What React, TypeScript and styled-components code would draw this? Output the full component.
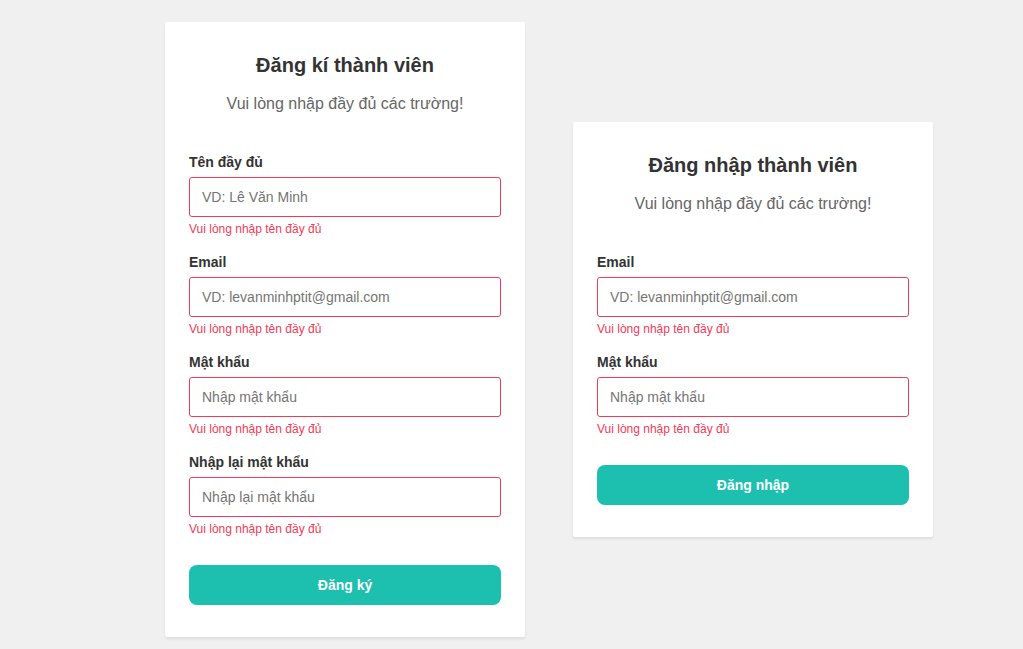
import React from "react";
import styled, { createGlobalStyle } from "styled-components";

const Global = createGlobalStyle`
  * { box-sizing: border-box; }
  html, body { margin: 0; padding: 0; background: #f0f0f0; }
  body { font-family: "Liberation Sans", Arial, sans-serif; }
`;

const Page = styled.div`
  min-height: 100vh;
  display: flex;
  align-items: center;
  gap: 48px;
  padding: 10px 0 0 165px;
`;

const Card = styled.form`
  width: 360px;
  background: #fff;
  border-radius: 2px;
  padding: 31px 24px 32px;
  box-shadow: 0 2px 3px rgba(0, 0, 0, 0.08);
  display: flex;
  flex-direction: column;
`;

const Title = styled.h3`
  margin: 0;
  font-size: 20px;
  line-height: 24px;
  font-weight: 700;
  color: #333;
  text-align: center;
`;

const Subtitle = styled.p`
  margin: 16px 0 37px;
  font-size: 16px;
  line-height: 22px;
  color: #666;
  text-align: center;
`;

const Group = styled.div`
  display: flex;
  flex-direction: column;
  margin-bottom: 15px;
  &:last-of-type { margin-bottom: 28px; }
`;

const Label = styled.label`
  font-size: 14px;
  line-height: 20px;
  font-weight: 700;
  color: #333;
  margin-bottom: 5px;
`;

const Input = styled.input`
  height: 40px;
  width: 100%;
  padding: 0 12px;
  border: 1px solid #f33a58;
  border-radius: 3px;
  outline: none;
  font-family: inherit;
  font-size: 14px;
  color: #333;
  &::placeholder { color: #757575; }
`;

const ErrorText = styled.span`
  margin-top: 4px;
  font-size: 12px;
  line-height: 16px;
  color: #f33a58;
`;

const Button = styled.button`
  height: 40px;
  width: 100%;
  border: none;
  border-radius: 8px;
  background: #1dbfaf;
  color: #fff;
  font-family: inherit;
  font-size: 14px;
  font-weight: 700;
  cursor: pointer;
`;

type Field = { label: string; placeholder: string; type?: string };

const Form = ({ title, fields, action }: { title: string; fields: Field[]; action: string }) => (
  <Card onSubmit={(e) => e.preventDefault()}>
    <Title>{title}</Title>
    <Subtitle>Vui lòng nhập đầy đủ các trường!</Subtitle>
    {fields.map((f) => (
      <Group key={f.label}>
        <Label>{f.label}</Label>
        <Input type={f.type ?? "text"} placeholder={f.placeholder} />
        <ErrorText>Vui lòng nhập tên đầy đủ</ErrorText>
      </Group>
    ))}
    <Button type="submit">{action}</Button>
  </Card>
);

export default function App() {
  return (
    <>
      <Global />
      <Page>
        <Form
          title="Đăng kí thành viên"
          action="Đăng ký"
          fields={[
            { label: "Tên đầy đủ", placeholder: "VD: Lê Văn Minh" },
            { label: "Email", placeholder: "VD: levanminhptit@gmail.com" },
            { label: "Mật khẩu", placeholder: "Nhập mật khẩu", type: "password" },
            { label: "Nhập lại mật khẩu", placeholder: "Nhập lại mật khẩu", type: "password" },
          ]}
        />
        <Form
          title="Đăng nhập thành viên"
          action="Đăng nhập"
          fields={[
            { label: "Email", placeholder: "VD: levanminhptit@gmail.com" },
            { label: "Mật khẩu", placeholder: "Nhập mật khẩu", type: "password" },
          ]}
        />
      </Page>
    </>
  );
}
